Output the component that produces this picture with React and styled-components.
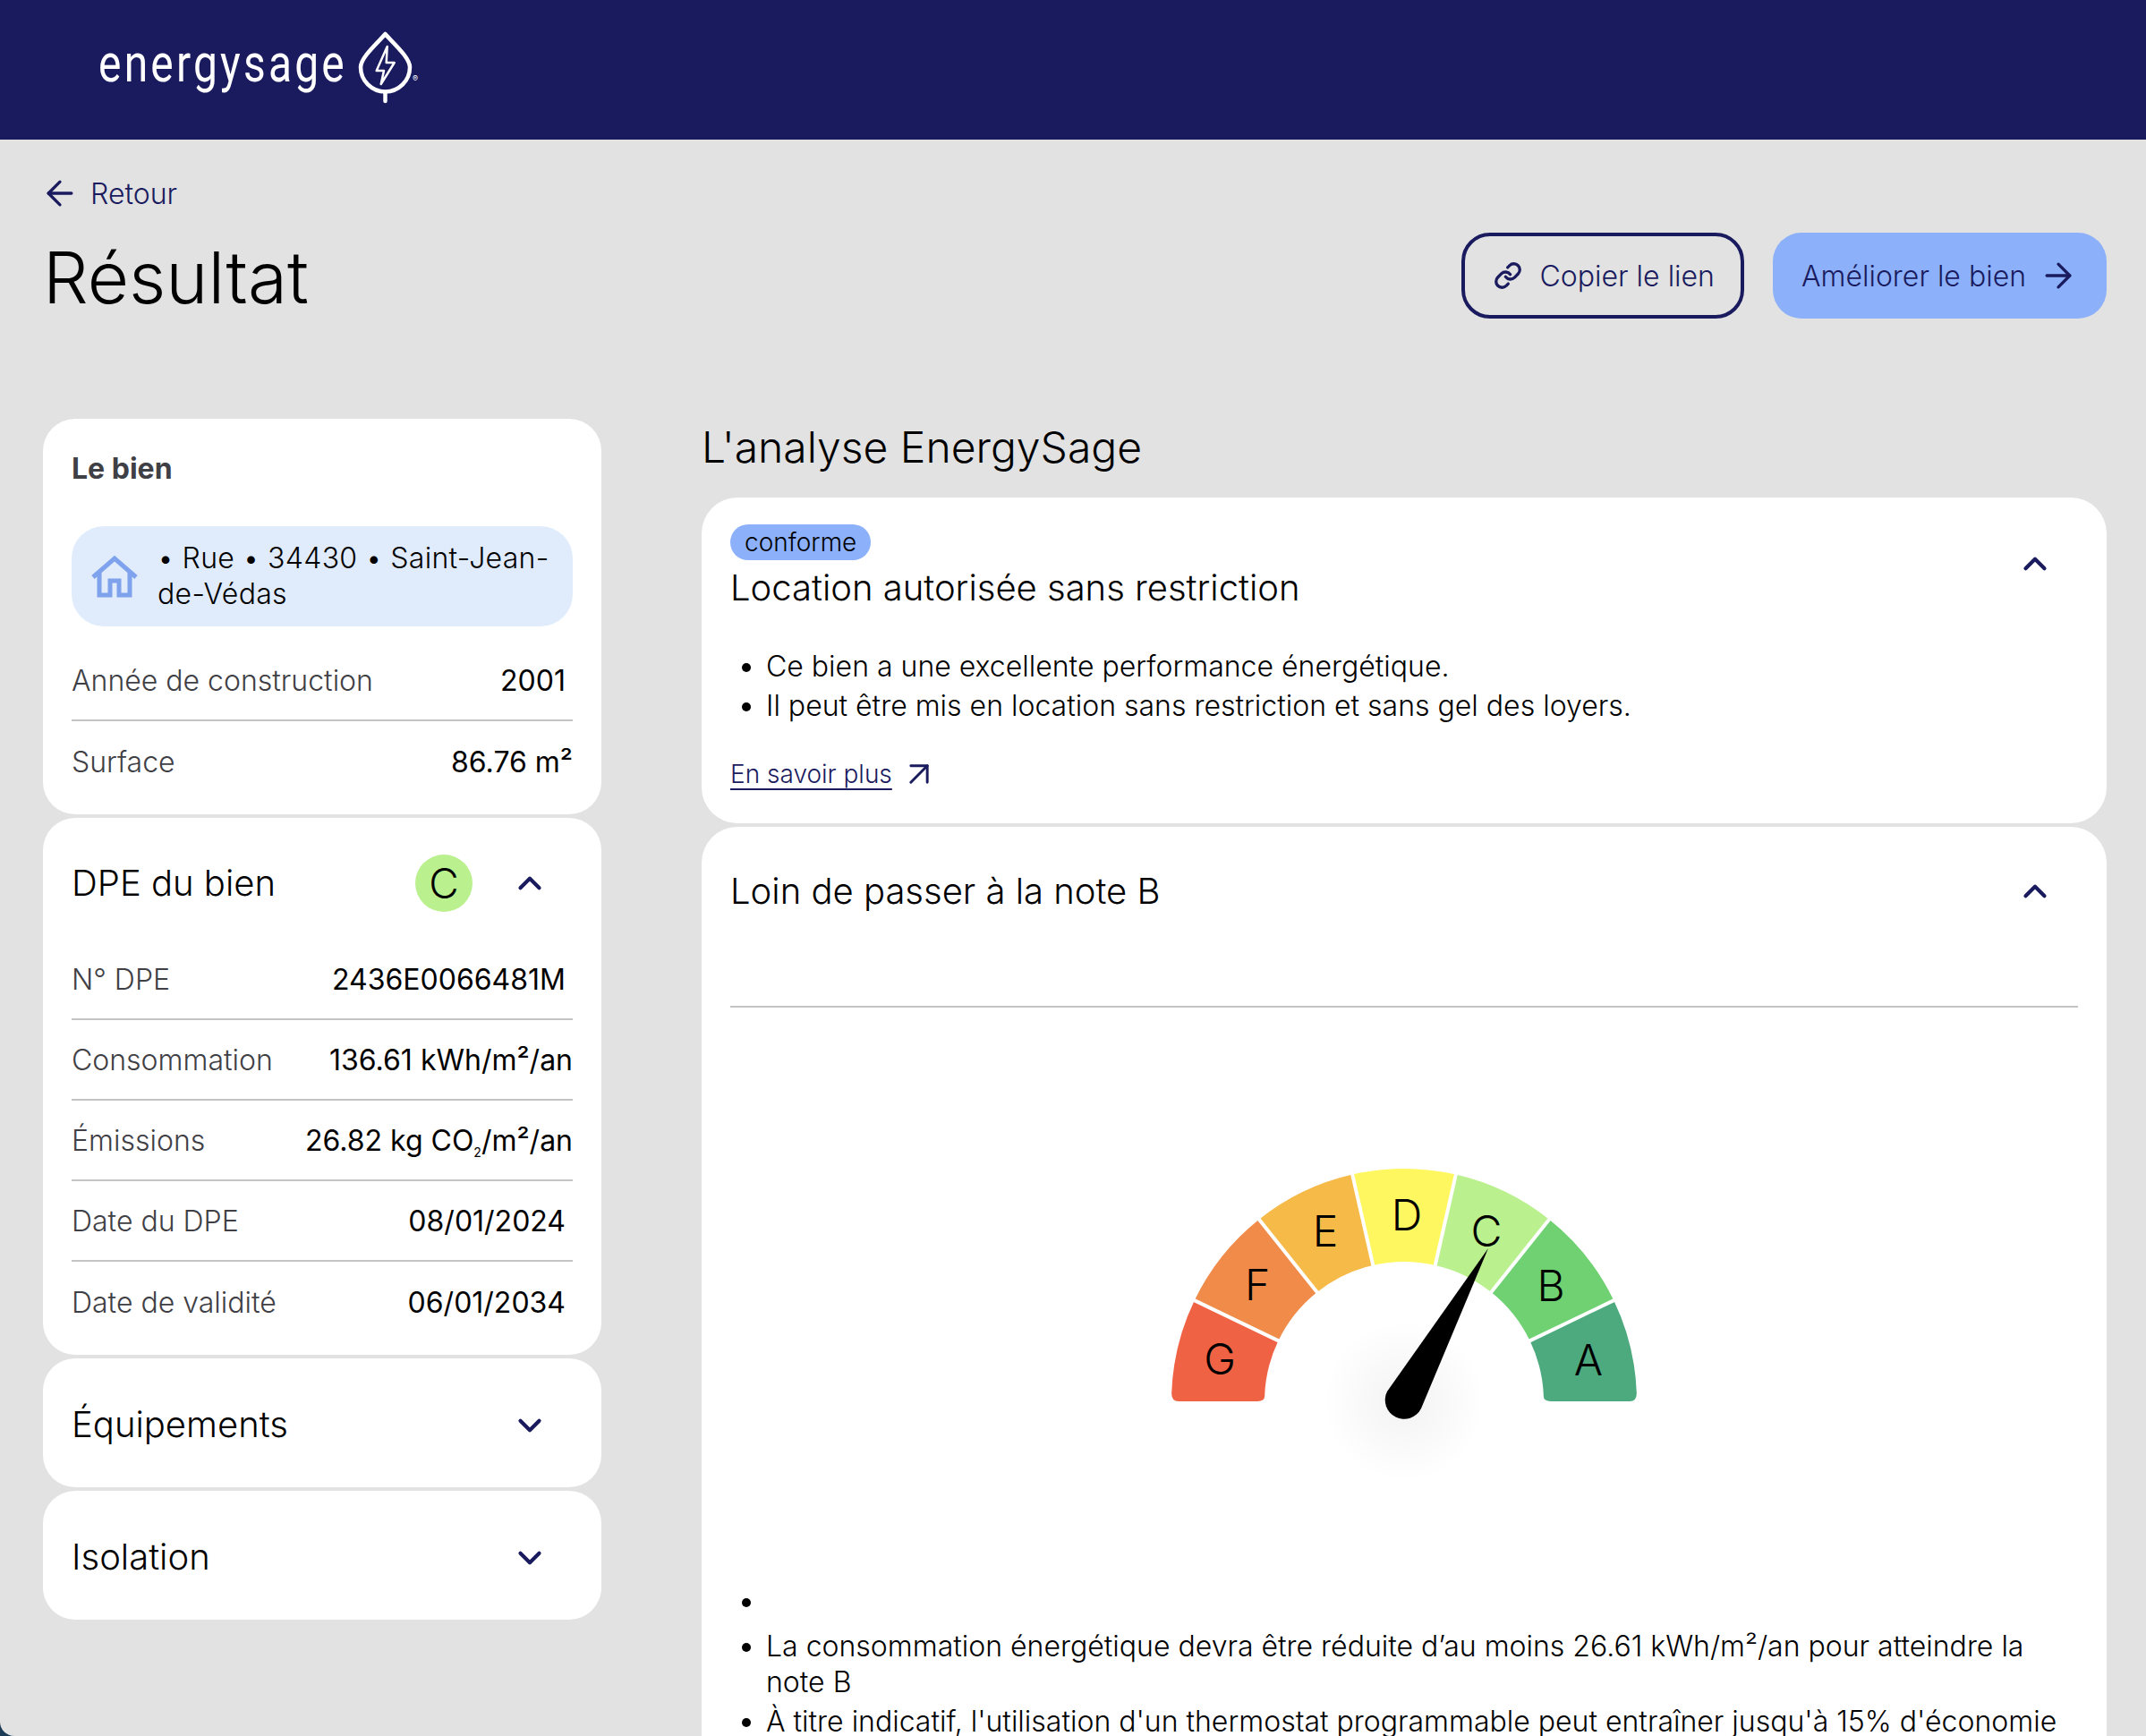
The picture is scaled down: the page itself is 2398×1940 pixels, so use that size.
import React from 'react';
import styled, { createGlobalStyle } from 'styled-components';
import { ArrowLeft, ArrowRight, ArrowUpRight, ChevronDown, ChevronUp, Link } from 'lucide-react';

const GlobalStyle = createGlobalStyle`
  html, body { margin: 0; padding: 0; background: #1c3b57; }
  * { box-sizing: border-box; }
  body { font-family: Inter, "Liberation Sans", sans-serif; color: #000; }
`;

const Page = styled.div`
  width: 2398px;
  height: 1940px;
  overflow: hidden;
  background: #e2e2e2;
  border-radius: 0 0 0 16px;
`;

const Header = styled.header`
  height: 156px;
  background: #1a1b5e;
  padding-left: 108px;
  display: flex;
  align-items: flex-start;
  padding-top: 32px;
`;

const Top = styled.div`
  padding: 42px 44px 0 48px;
  height: 312px;
`;

const BackLink = styled.a`
  display: flex;
  align-items: center;
  gap: 12px;
  height: 36px;
  margin-left: -3px;
  color: #1a1b5e;
  font-size: 32px;
  font-weight: 300;
`;

const TitleRow = styled.div`
  display: flex;
  justify-content: space-between;
  align-items: flex-start;
`;

const Title = styled.h1`
  margin: 28px 0 0 0;
  font-size: 80px;
  line-height: 96px;
  font-weight: 300;
`;

const Actions = styled.div`
  display: flex;
  gap: 32px;
  margin-top: 26px;
`;

const Button = styled.button`
  height: 96px;
  display: flex;
  align-items: center;
  border-radius: 32px;
  font-family: inherit;
  font-size: 32px;
  font-weight: 300;
  color: #1a1b5e;
  background: ${(p) => (p.$primary ? '#8cb1fa' : 'transparent')};
  border: ${(p) => (p.$primary ? '0' : '4px solid #1a1b5e')};
  padding: ${(p) => (p.$primary ? '0 32px' : '0 29px 0 32px')};
  gap: ${(p) => (p.$primary ? '14px' : '20px')};
`;

const Columns = styled.main`
  display: grid;
  grid-template-columns: 624px 1570px;
  column-gap: 112px;
  padding-left: 48px;
`;

const Side = styled.aside`
  display: flex;
  flex-direction: column;
  gap: 4px;
`;

const Card = styled.section`
  background: #fff;
  border-radius: 36px;
  padding: 0 32px ${(p) => p.$bottom || 0}px;
`;

const CardLabel = styled.h2`
  margin: 0;
  padding-top: 36px;
  height: 120px;
  font-size: 32px;
  line-height: 40px;
  font-weight: 700;
  color: #3f4045;
`;

const Address = styled.div`
  display: flex;
  align-items: center;
  gap: 22px;
  height: 112px;
  margin-bottom: 16px;
  padding: 0 22px;
  border-radius: 36px;
  background: #e0ebfc;
  font-size: 32px;
  line-height: 40px;
  font-weight: 300;
  letter-spacing: 0.3px;
  svg { flex-shrink: 0; }
`;

const Row = styled.div`
  display: flex;
  justify-content: space-between;
  align-items: center;
  height: 90px;
  border-bottom: ${(p) => (p.$last ? '0' : '2px solid #c4c4c4')};
  font-size: 32px;
  font-weight: 300;
  padding-right: ${(p) => (p.$inset ? '8px' : '0')};
`;

const RowLabel = styled.span`
  color: #3f4045;
`;

const RowValue = styled.span`
  color: #000;
  font-weight: 400;
  white-space: nowrap;
  sub { font-size: 14px; line-height: 0; }
`;

const AccordionHead = styled.div`
  display: flex;
  align-items: center;
  height: ${(p) => p.$height}px;
  padding-top: ${(p) => p.$top || 0}px;
  font-size: 40px;
  font-weight: 300;
`;

const HeadTitle = styled.span`
  flex: 1;
`;

const Grade = styled.span`
  width: 64px;
  height: 64px;
  border-radius: 50%;
  background: #baf08e;
  display: flex;
  align-items: center;
  justify-content: center;
  margin-right: 43px;
  font-size: 46px;
  font-weight: 300;
`;

const Chevron = styled.span`
  display: flex;
  width: 42px;
  margin-right: 27px;
  margin-top: ${(p) => (p.$down ? '3px' : '0')};
  color: #1a1b5e;
`;

const Analysis = styled.div`
  display: flex;
  flex-direction: column;
`;

const AnalysisTitle = styled.h2`
  margin: 0;
  height: 88px;
  padding-top: 0;
  font-size: 48px;
  line-height: 64px;
  font-weight: 300;
`;

const Panel = styled.section`
  background: #fff;
  border-radius: 40px;
  padding: 0 32px;
  margin-bottom: 4px;
  height: ${(p) => p.$height}px;
`;

const PanelHead = styled.div`
  display: flex;
  justify-content: space-between;
  align-items: center;
  height: ${(p) => p.$height}px;
`;

const HeadBlock = styled.div`
  align-self: flex-start;
  padding-top: 30px;
`;

const Badge = styled.span`
  display: inline-block;
  height: 40px;
  padding: 0 16px;
  border-radius: 20px;
  background: #8cb1fa;
  font-size: 28px;
  line-height: 40px;
  font-weight: 300;
`;

const PanelTitle = styled.h3`
  margin: 0;
  font-size: 40px;
  line-height: 62px;
  font-weight: 300;
`;

const List = styled.ul`
  margin: ${(p) => p.$margin || '0'};
  padding-left: 40px;
  font-size: 32px;
  line-height: 40px;
  font-weight: 300;
  li { margin-bottom: 4px; }
`;

const EmptyItem = styled.li`
  && { margin-bottom: 10px; }
`;

const MoreLink = styled.div`
  display: flex;
  align-items: center;
  gap: 8px;
  height: 40px;
  color: #1a1b5e;
  font-size: 28px;
  font-weight: 300;
  span { text-decoration: underline; text-underline-offset: 6px; text-decoration-thickness: 2px; }
`;

const GaugeWrap = styled.div`
  display: flex;
  justify-content: center;
  padding: 170px 0 94px;
`;

const Divider = styled.div`
  height: 2px;
  margin-top: 56px;
  background: #c4c4c4;
`;

const Logo = () => (
  <svg width="380" height="92" viewBox="0 0 380 92" fill="none">
    <text x="2" y="59" fill="#fff" fontFamily="Roboto, sans-serif" fontSize="59" fontWeight="400" letterSpacing="4" textLength="278" lengthAdjust="spacingAndGlyphs">energysage</text>
    <path d="M322.5 6 C330 15 350 32 350 43 A27.5 27.5 0 0 1 295 43 C295 32 315 15 322.5 6 Z" stroke="#fff" strokeWidth="4.5" strokeLinejoin="round" />
    <path d="M322.5 71 V81" stroke="#fff" strokeWidth="4.5" strokeLinecap="round" />
    <path d="M324.7 20 L312.7 47 H321 L317.7 62 L332.7 38 H323.7 Z" stroke="#fff" strokeWidth="2.5" strokeLinejoin="round" />
    <text x="353" y="59" fill="#fff" fontFamily="Inter, sans-serif" fontSize="9">®</text>
  </svg>
);

const HouseIcon = () => (
  <svg width="52" height="48" viewBox="0 0 52 48" fill="none" stroke="#7ea2ec" strokeWidth="5">
    <path d="M2 25 L26 4 L50 25" />
    <path d="M9 20 V45 H21 V29 H31 V45 H43 V20" />
  </svg>
);

const CX = 270;
const CY = 270;
const segments = [
  { l: 'G', c: '#ef6243', x: 64, y: 223 },
  { l: 'F', c: '#f08b4a', x: 106, y: 140 },
  { l: 'E', c: '#f6ba48', x: 182, y: 80 },
  { l: 'D', c: '#fff75f', x: 273, y: 62 },
  { l: 'C', c: '#baf08e', x: 362, y: 80 },
  { l: 'B', c: '#6fd172', x: 434, y: 141 },
  { l: 'A', c: '#4caa7e', x: 476, y: 224 },
];

const polar = (r, deg) => {
  const a = (deg * Math.PI) / 180;
  return [CX - r * Math.cos(a), CY - r * Math.sin(a)];
};

// the two end sectors have rounded feet on the baseline
const sectorPath = (i) => {
  const step = 180 / 7;
  const a0 = i === 0 ? 2 : i * step;
  const a1 = i === 6 ? 178 : (i + 1) * step;
  const [x0, y0] = polar(260, a0);
  const [x1, y1] = polar(260, a1);
  const [x2, y2] = polar(156, a1);
  const [x3, y3] = polar(156, a0);
  let d = `M${x0} ${y0} A260 260 0 0 1 ${x1} ${y1} `;
  if (i === 6) d += `Q${CX + 260} ${CY} ${CX + 252} ${CY} L${CX + 164} ${CY} Q${CX + 156} ${CY} ${x2} ${y2} `;
  else d += `L${x2} ${y2} `;
  d += `A156 156 0 0 0 ${x3} ${y3} `;
  if (i === 0) d += `Q${CX - 156} ${CY} ${CX - 164} ${CY} L${CX - 252} ${CY} Q${CX - 260} ${CY} ${x0} ${y0} `;
  return d + 'Z';
};

const Gauge = () => (
  <svg width="540" height="380" viewBox="0 0 540 380">
    <defs>
      <radialGradient id="glow">
        <stop offset="0" stopColor="#000" stopOpacity="0.05" />
        <stop offset="1" stopColor="#000" stopOpacity="0" />
      </radialGradient>
    </defs>
    <circle cx={CX} cy={CY} r="90" fill="url(#glow)" />
    {segments.map((s, i) => (
      <path key={s.l} d={sectorPath(i)} fill={s.c} />
    ))}
    {[1, 2, 3, 4, 5, 6].map((i) => {
      const [x0, y0] = polar(150, (i * 180) / 7);
      const [x1, y1] = polar(266, (i * 180) / 7);
      return <line key={i} x1={x0} y1={y0} x2={x1} y2={y1} stroke="#fff" strokeWidth="4" />;
    })}
    {segments.map((s) => (
      <text key={s.l} x={s.x} y={s.y + 17} fontSize="48" fontFamily="Inter, sans-serif" fontWeight="300" textAnchor="middle">{s.l}</text>
    ))}
    <path d="M364 99 L289 278 A21 21 0 0 1 251 259 Z" fill="#000" />
  </svg>
);

const Chev = ({ up }) => (
  <Chevron $down={!up}>{up ? <ChevronUp size={42} strokeWidth={2.4} /> : <ChevronDown size={42} strokeWidth={2.4} />}</Chevron>
);

export default function App() {
  return (
    <>
      <GlobalStyle />
      <Page>
        <Header><Logo /></Header>
        <Top>
          <BackLink><ArrowLeft size={44} strokeWidth={1.8} />Retour</BackLink>
          <TitleRow>
            <Title>Résultat</Title>
            <Actions>
              <Button><Link size={32} strokeWidth={2.5} />Copier le lien</Button>
              <Button $primary>Améliorer le bien<ArrowRight size={44} strokeWidth={1.8} /></Button>
            </Actions>
          </TitleRow>
        </Top>
        <Columns>
          <Side>
            <Card $bottom={14}>
              <CardLabel>Le bien</CardLabel>
              <Address><HouseIcon /><span>• Rue • 34430 • Saint-Jean-de-Védas</span></Address>
              <Row $inset><RowLabel>Année de construction</RowLabel><RowValue>2001</RowValue></Row>
              <Row $last><RowLabel>Surface</RowLabel><RowValue>86.76 m²</RowValue></Row>
            </Card>
            <Card $bottom={14}>
              <AccordionHead $height={136} $top={9}>
                <HeadTitle>DPE du bien</HeadTitle><Grade>C</Grade><Chev up />
              </AccordionHead>
              <Row $inset><RowLabel>N° DPE</RowLabel><RowValue>2436E0066481M</RowValue></Row>
              <Row><RowLabel>Consommation</RowLabel><RowValue>136.61 kWh/m²/an</RowValue></Row>
              <Row><RowLabel>Émissions</RowLabel><RowValue>26.82 kg CO<sub>2</sub>/m²/an</RowValue></Row>
              <Row $inset><RowLabel>Date du DPE</RowLabel><RowValue>08/01/2024</RowValue></Row>
              <Row $last $inset><RowLabel>Date de validité</RowLabel><RowValue>06/01/2034</RowValue></Row>
            </Card>
            <Card><AccordionHead $height={144} $top={3}><HeadTitle>Équipements</HeadTitle><Chev /></AccordionHead></Card>
            <Card><AccordionHead $height={144} $top={3}><HeadTitle>Isolation</HeadTitle><Chev /></AccordionHead></Card>
          </Side>
          <Analysis>
            <AnalysisTitle>L'analyse EnergySage</AnalysisTitle>
            <Panel $height={364}>
              <PanelHead $height={148}>
                <HeadBlock>
                  <Badge>conforme</Badge>
                  <PanelTitle>Location autorisée sans restriction</PanelTitle>
                </HeadBlock>
                <Chev up />
              </PanelHead>
              <List $margin="21px 0 36px">
                <li>Ce bien a une excellente performance énergétique.</li>
                <li>Il peut être mis en location sans restriction et sans gel des loyers.</li>
              </List>
              <MoreLink><span>En savoir plus</span><ArrowUpRight size={44} strokeWidth={1.6} /></MoreLink>
            </Panel>
            <Panel $height={1100}>
              <PanelHead $height={144}>
                <PanelTitle>Loin de passer à la note B</PanelTitle>
                <Chev up />
              </PanelHead>
              <Divider />
              <GaugeWrap><Gauge /></GaugeWrap>
              <List>
                <EmptyItem>&nbsp;</EmptyItem>
                <li>La consommation énergétique devra être réduite d’au moins 26.61 kWh/m²/an pour atteindre la note B</li>
                <li>À titre indicatif, l'utilisation d'un thermostat programmable peut entraîner jusqu'à 15% d'économie</li>
              </List>
            </Panel>
          </Analysis>
        </Columns>
      </Page>
    </>
  );
}
